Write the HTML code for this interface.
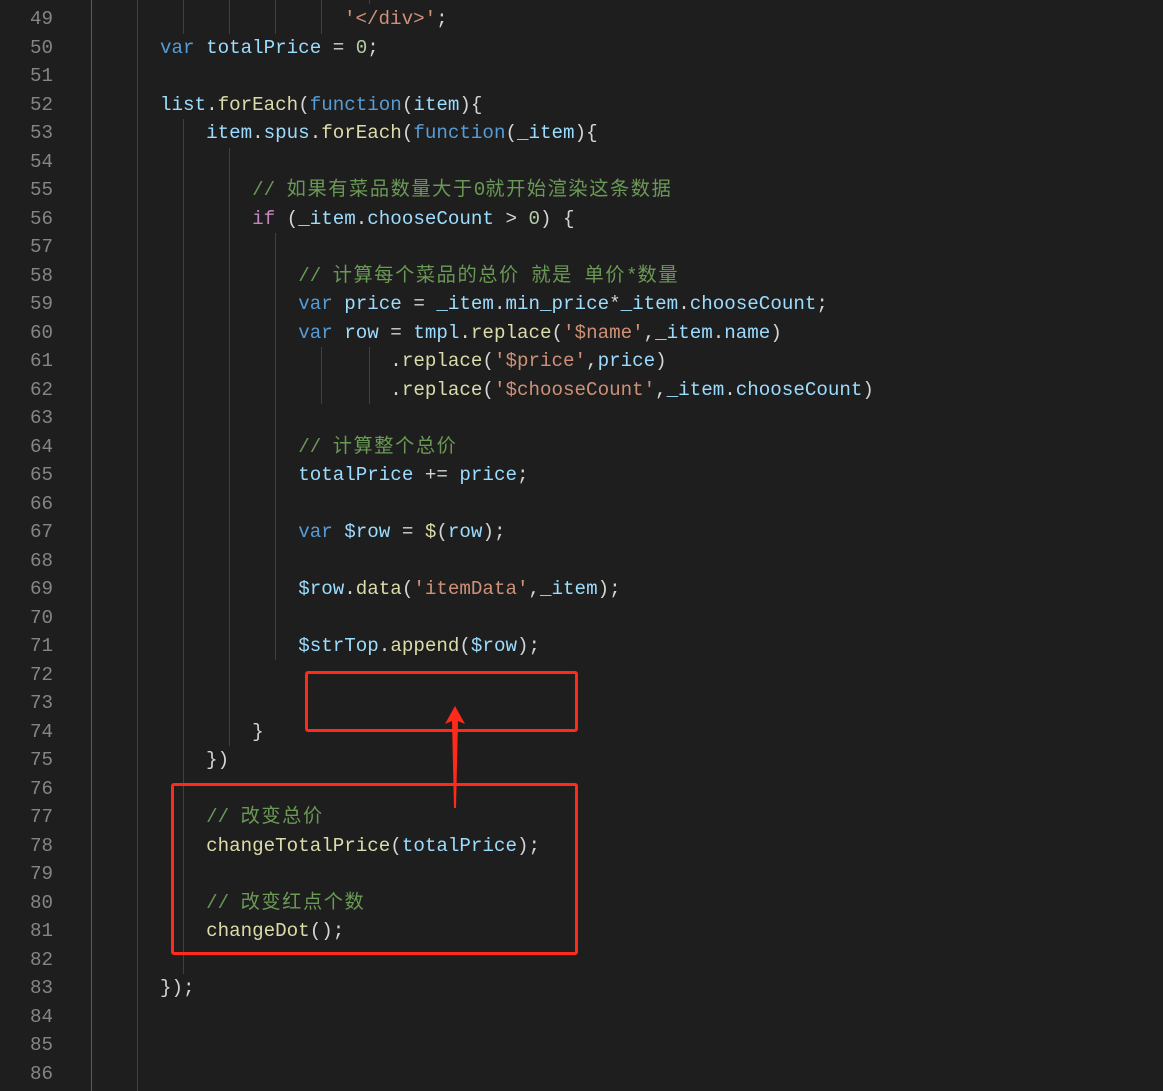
<!DOCTYPE html>
<html><head><meta charset="utf-8"><style>
body{margin:0;width:1163px;height:1091px;background:#1e1e1e;overflow:hidden;position:relative;font-family:"Liberation Mono","Noto Sans CJK SC",monospace;font-size:19.2px}
.ln{position:absolute;left:0;width:53px;text-align:right;color:#858585;height:28.5px;line-height:28.5px}
.c{position:absolute;left:160px;white-space:pre;color:#d4d4d4;height:28.5px;line-height:28.5px}
.g{position:absolute;width:1px;background:#404040}
.k{color:#569cd6}.v{color:#9cdcfe}.f{color:#dcdcaa}.s{color:#ce9178}.cm{color:#6a9955}.n{color:#b5cea8}.p{color:#c586c0}
.z{letter-spacing:1.6px}
.box{position:absolute;border:3.5px solid #ff2a1a;border-radius:3px;box-sizing:border-box}
</style></head><body>
<div class="g" style="left:91px;top:0;height:1091px;background:#5a5a5a"></div>
<div class="g" style="left:137px;top:0;height:1091px"></div>
<div class="g" style="left:183px;top:0;height:34px"></div>
<div class="g" style="left:229px;top:0;height:34px"></div>
<div class="g" style="left:275px;top:0;height:34px"></div>
<div class="g" style="left:321px;top:0;height:34px"></div>
<div class="g" style="left:369px;top:0;height:4px"></div>
<div class="g" style="left:183px;top:119px;height:855px"></div>
<div class="g" style="left:229px;top:148px;height:598px"></div>
<div class="g" style="left:275px;top:233px;height:427px"></div>
<div class="g" style="left:321px;top:347px;height:57px"></div>
<div class="g" style="left:369px;top:347px;height:57px"></div>
<div id="L"></div>
<script>
var lines={
49:'<span style="margin-left:184px"></span><span class="s">\'&lt;/div&gt;\'</span>;',
50:'<span class="k">var</span> <span class="v">totalPrice</span> = <span class="n">0</span>;',
52:'<span class="v">list</span>.<span class="f">forEach</span>(<span class="k">function</span>(<span class="v">item</span>){',
53:'    <span class="v">item</span>.<span class="v">spus</span>.<span class="f">forEach</span>(<span class="k">function</span>(<span class="v">_item</span>){',
55:'        <span class="cm">// <span class="z">如果有菜品数量大于</span>0<span class="z">就开始渲染这条数据</span></span>',
56:'        <span class="p">if</span> (<span class="v">_item</span>.<span class="v">chooseCount</span> &gt; <span class="n">0</span>) {',
58:'            <span class="cm">// <span class="z">计算每个菜品的总价</span> <span class="z">就是</span> <span class="z">单价</span>*<span class="z">数量</span></span>',
59:'            <span class="k">var</span> <span class="v">price</span> = <span class="v">_item</span>.<span class="v">min_price</span>*<span class="v">_item</span>.<span class="v">chooseCount</span>;',
60:'            <span class="k">var</span> <span class="v">row</span> = <span class="v">tmpl</span>.<span class="f">replace</span>(<span class="s">\'$name\'</span>,<span class="v">_item</span>.<span class="v">name</span>)',
61:'                    .<span class="f">replace</span>(<span class="s">\'$price\'</span>,<span class="v">price</span>)',
62:'                    .<span class="f">replace</span>(<span class="s">\'$chooseCount\'</span>,<span class="v">_item</span>.<span class="v">chooseCount</span>)',
64:'            <span class="cm">// <span class="z">计算整个总价</span></span>',
65:'            <span class="v">totalPrice</span> += <span class="v">price</span>;',
67:'            <span class="k">var</span> <span class="v">$row</span> = <span class="f">$</span>(<span class="v">row</span>);',
69:'            <span class="v">$row</span>.<span class="f">data</span>(<span class="s">\'itemData\'</span>,<span class="v">_item</span>);',
71:'            <span class="v">$strTop</span>.<span class="f">append</span>(<span class="v">$row</span>);',
74:'        }',
75:'    })',
77:'    <span class="cm">// <span class="z">改变总价</span></span>',
78:'    <span class="f">changeTotalPrice</span>(<span class="v">totalPrice</span>);',
80:'    <span class="cm">// <span class="z">改变红点个数</span></span>',
81:'    <span class="f">changeDot</span>();',
83:'});'
};
var h='';
for(var n=49;n<=86;n++){var t=5+(n-49)*28.5;
h+='<div class="ln" style="top:'+t+'px">'+n+'</div>';
if(lines[n])h+='<div class="c" style="top:'+t+'px">'+lines[n]+'</div>';}
document.getElementById('L').innerHTML=h;
</script>
<div class="box" style="left:305px;top:671px;width:273px;height:61px"></div>
<div class="box" style="left:171px;top:783px;width:407px;height:172px"></div>
<svg style="position:absolute;left:0;top:0" width="1163" height="1091"><polygon points="455,706 445,724 452,721 454,808 456,808 458,721 465,724" fill="#ff2a1a"/></svg>
</body></html>
